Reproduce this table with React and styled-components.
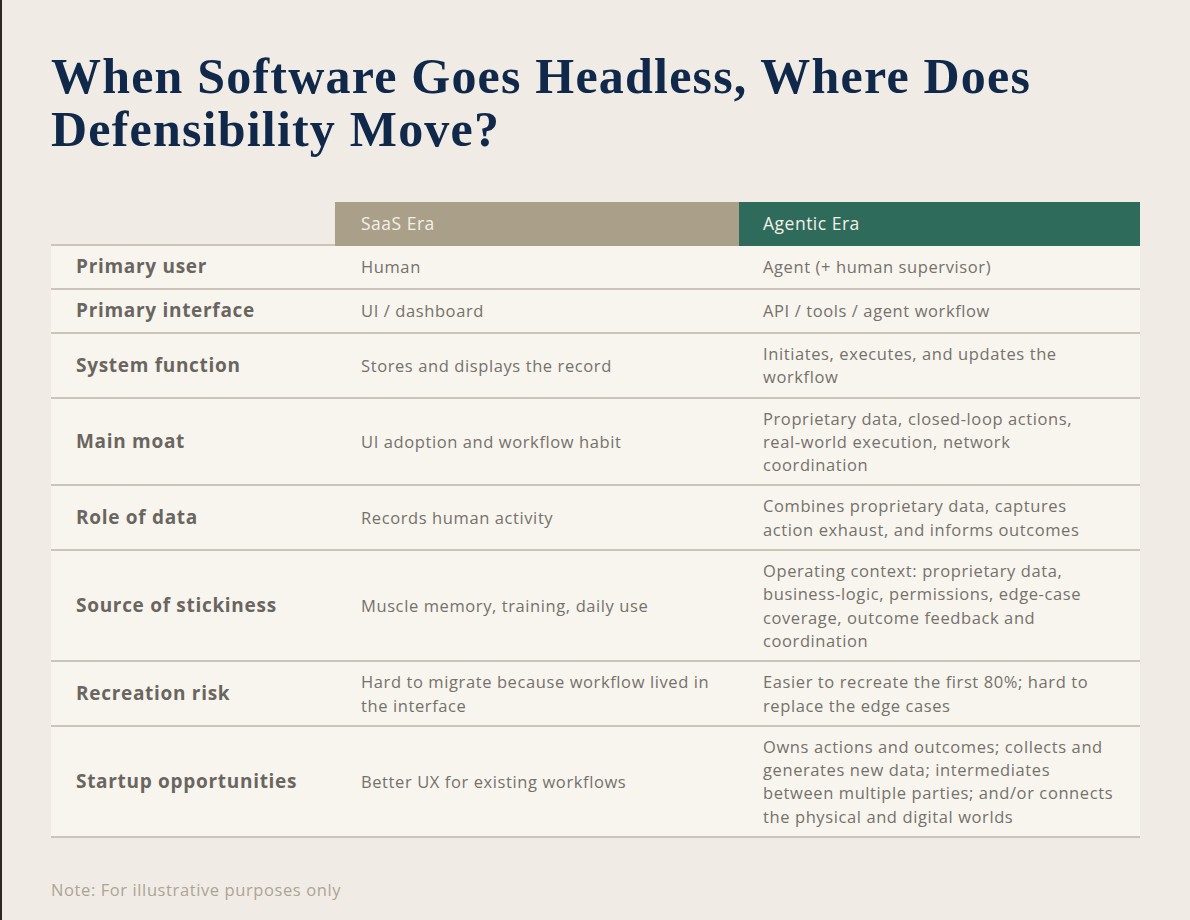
import React from "react";
import styled, { createGlobalStyle } from "styled-components";

const Global = createGlobalStyle`
  html, body { margin: 0; padding: 0; background: #f0ece5; }
  body { font-family: "Open Sans", "Liberation Sans", sans-serif; }
`;

const Page = styled.div`
  width: 1190px;
  min-height: 920px;
  box-sizing: border-box;
  border-left: 2px solid #2b2824;
  padding: 50px 50px 0 49px;
  background: #f0ece5;
`;

const Title = styled.h1`
  margin: 0;
  font-family: "Liberation Serif", "Times New Roman", serif;
  font-weight: 700;
  font-size: 50px;
  line-height: 53px;
  letter-spacing: 1.2px;
  color: #10294a;
`;

const Table = styled.div`
  margin-top: 46px;
  display: grid;
  grid-template-columns: 284px 404px 401px;
`;

const HeadCell = styled.div`
  height: 44px;
  box-sizing: border-box;
  display: flex;
  align-items: center;
  padding-left: ${p => p.$pad || 26}px;
  background: ${p => p.$bg || "transparent"};
  color: #f4f0e8;
  font-size: 17.5px;
  letter-spacing: 0.5px;
  border-bottom: 2px solid ${p => (p.$bg ? p.$bg : "#cbc5b8")};
`;

const Cell = styled.div`
  box-sizing: border-box;
  min-height: 44px;
  display: flex;
  align-items: center;
  background: #f8f5ef;
  border-bottom: 2px solid #cbc5b8;
  padding: 8px ${p => p.$right || 24}px 8px ${p => p.$left || 26}px;
  font-size: ${p => (p.$label ? 19 : 16.5)}px;
  font-weight: ${p => (p.$label ? 700 : 400)};
  letter-spacing: ${p => (p.$label ? 0.7 : 0.6)}px;
  line-height: 23.3px;
  color: ${p => (p.$label ? "#6a665f" : "#75716b")};
`;

const Note = styled.div`
  margin-top: 40px;
  font-size: 16.5px;
  letter-spacing: 0.6px;
  color: #aca496;
`;

const rows = [
  ["Primary user", "Human", "Agent (+ human supervisor)"],
  ["Primary interface", "UI / dashboard", "API / tools / agent workflow"],
  ["System function", "Stores and displays the record", "Initiates, executes, and updates the workflow"],
  ["Main moat", "UI adoption and workflow habit", "Proprietary data, closed-loop actions, real\u2011world execution, network coordination"],
  ["Role of data", "Records human activity", "Combines proprietary data, captures action exhaust, and informs outcomes"],
  ["Source of stickiness", "Muscle memory, training, daily use", "Operating context: proprietary data, business-logic, permissions, edge-case coverage, outcome feedback and coordination"],
  ["Recreation risk", "Hard to migrate because workflow lived in the interface", "Easier to recreate the first 80%; hard to replace the edge cases"],
  ["Startup opportunities", "Better UX for existing workflows", "Owns actions and outcomes; collects and generates new data; intermediates between multiple parties; and/or connects the physical and digital worlds"],
];

export default function App() {
  return (
    <>
      <Global />
      <Page>
        <Title>
          When Software Goes Headless, Where Does
          <br />
          Defensibility Move?
        </Title>
        <Table>
          <HeadCell />
          <HeadCell $bg="#aa9f89">SaaS Era</HeadCell>
          <HeadCell $bg="#2f6b5b" $pad={24}>Agentic Era</HeadCell>
          {rows.map(r => (
            <React.Fragment key={r[0]}>
              <Cell $label $left={25}>{r[0]}</Cell>
              <Cell $left={26} $right={22}>{r[1]}</Cell>
              <Cell $left={24} $right={24}>{r[2]}</Cell>
            </React.Fragment>
          ))}
        </Table>
        <Note>Note: For illustrative purposes only</Note>
      </Page>
    </>
  );
}
